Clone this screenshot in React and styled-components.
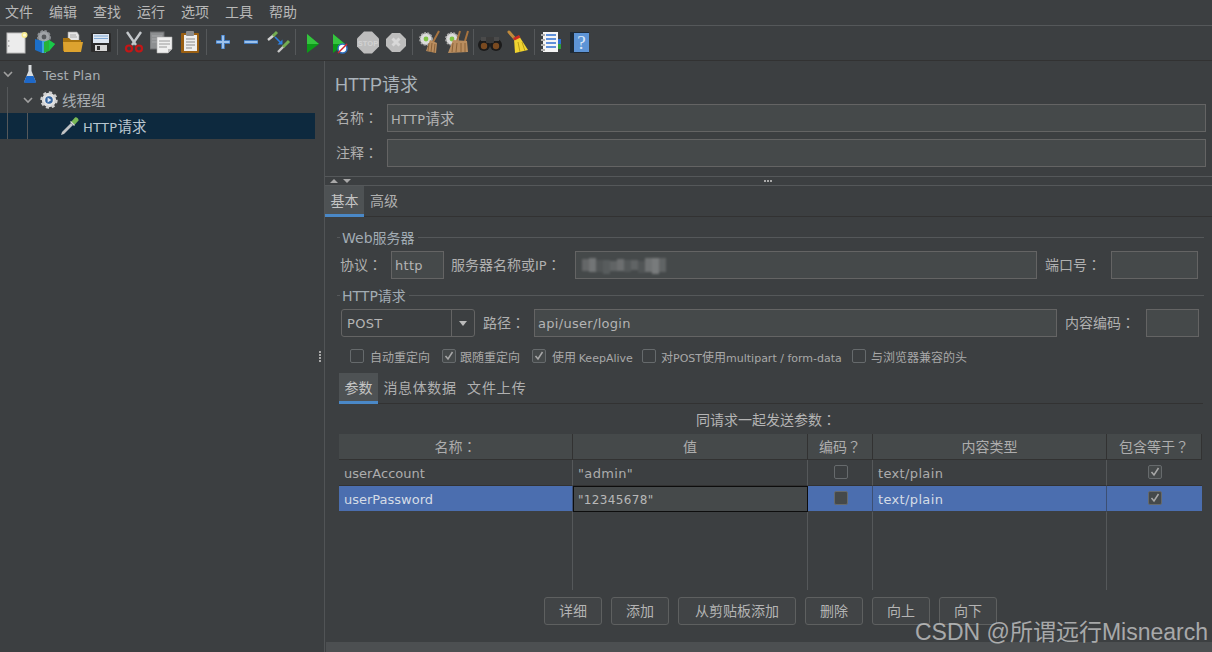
import React from 'react';
import styled, { createGlobalStyle } from 'styled-components';

const Global = createGlobalStyle`
  html, body { margin: 0; padding: 0; background: #3c3f41; }
  * { box-sizing: border-box; }
  body { font-family: "DejaVu Sans", "Noto Sans CJK SC", sans-serif; font-size: 14px; color: #bbbbbb; }
`;

const Page = styled.div`
  position: relative; width: 1212px; height: 652px; overflow: hidden;
  display: flex; flex-direction: column; background: #3c3f41;
`;
const MenuBar = styled.div`
  height: 26px; display: flex; gap: 16px; padding-left: 5px; align-items: center;
  border-bottom: 1px solid #55585a; color: #b8b8b8; font-family: "Noto Sans CJK SC", sans-serif;
  font-size: 14px; line-height: 24px; padding-bottom: 4px;
`;
const ToolBar = styled.div`
  height: 35px; display: flex; align-items: center; padding-left: 3px; padding-bottom: 2px;
  border-bottom: 1px solid #323232;
`;
const ToolButton = styled.div`
  width: 28px; height: 24px; display: flex; align-items: center; justify-content: center;
`;
const ToolSep = styled.div`
  width: 5px; height: 26px; display: flex; justify-content: center;
  &::before { content: ""; width: 1px; background: #55585a; }
`;
const Main = styled.div`flex: 1; display: flex; min-height: 0;`;
const Tree = styled.div`width: 315px; flex: none;`;
const TreeRow = styled.div`
  height: 26px; display: flex; align-items: center; padding-left: ${p => p.$pad}px;
  background: ${p => (p.$selected ? '#0d293e' : 'transparent')};
  color: ${p => (p.$selected ? '#b9c6d0' : '#a9aeb2')}; font-size: 13px; letter-spacing: ${p => p.$ls || 0}px;
  font-family: "DejaVu Sans", "Noto Sans CJK SC", sans-serif;
`;
const TreeText = styled.span`
  display: block; white-space: nowrap;
  padding-top: ${p => p.$pt || 0}px; padding-bottom: ${p => p.$pb || 0}px;
`;
const Cjk = styled.span`font-size: 14.5px; font-family: "Noto Sans CJK SC", sans-serif; letter-spacing: 0;`;
const Guide = styled.span`
  width: ${p => p.$w}px; height: 100%; flex: none; border-left: 1px solid #55585a;
`;
const Chevron = styled.svg`width: 12px; height: 12px; flex: none; margin-right: ${p => p.$mr}px;`;
const TreeIcon = styled.svg`width: 20px; height: 20px; flex: none; margin-right: 3px;`;
const Divider = styled.div`
  width: 10px; flex: none; border-right: 1px solid #515456; display: flex;
  align-items: flex-start; justify-content: center; padding-top: 290px;
`;
const Dots = styled.div`
  display: flex; flex-direction: ${p => (p.$row ? 'row' : 'column')}; gap: 1px;
  & > i { width: 2px; height: 2px; background: #a9a9a9; display: block; }
`;
const Editor = styled.div`flex: 1; min-width: 0; display: flex; flex-direction: column;`;
const Title = styled.div`
  height: 43px; padding: 12px 0 0 10px; font-size: 18px; line-height: 25px; color: #aab3ba;
  font-family: "Liberation Sans", "Noto Sans CJK SC", sans-serif;
`;
const FormRow = styled.div`
  display: flex; align-items: center; height: 28px; flex: none;
  padding: 0 ${p => p.$right ?? 6}px 0 ${p => p.$left ?? 11}px;
  margin-top: ${p => p.$top || 0}px;
`;
const Label = styled.span`
  flex: none; width: ${p => p.$w}px; margin-left: ${p => p.$ml || 0}px; white-space: nowrap; padding-bottom: 2px;
  font-family: "Noto Sans CJK SC", sans-serif; font-size: 14px; color: #b0b0b0;
`;
const Latin = styled.span`font-family: "DejaVu Sans", sans-serif; font-size: 13px;`;
const Punct = styled.span`font-family: "Noto Sans CJK TC", sans-serif;`;
const Field = styled.div`
  height: 28px; flex: ${p => (p.$w ? 'none' : '1')}; width: ${p => (p.$w ? `${p.$w}px` : 'auto')};
  min-width: 0; display: flex; align-items: center; padding-left: 3px;
  margin-left: ${p => p.$ml || 0}px;
  background: #45494a; border: 1px solid #646464; color: #b4b4b4; font-size: 13px; letter-spacing: 0.3px;
  font-family: "DejaVu Sans", "Noto Sans CJK SC", sans-serif;
`;
const FieldText = styled.span`white-space: nowrap; padding-bottom: 2px;`;
const Mosaic = styled.div`display: flex; align-items: center; height: 18px; margin-left: 3px; filter: blur(1px); opacity: 0.75;`;
const Tile = styled.i`display: block; width: 7px; height: ${p => p.$h}px; margin-top: ${p => p.$t}px;`;
const Splitter = styled.div`
  height: 10px; margin-top: 9px; border-top: 1px solid #55585a; border-bottom: 1px solid #55585a;
  display: flex; align-items: center; padding-left: 5px; flex: none;
`;
const SplitArrows = styled.svg`width: 22px; height: 8px; flex: none;`;
const SplitHandle = styled.div`margin-left: 412px;`;
const Tabs = styled.div`
  display: flex; height: 31px; flex: none; border-bottom: 1px solid #323232;
  margin: ${p => p.$margin}; font-family: "Noto Sans CJK SC", sans-serif; font-size: 14px;
`;
const Tab = styled.div`
  height: 31px; padding: 0 ${p => p.$px}px; display: flex; align-items: center;
  color: ${p => (p.$active ? '#c5c5c5' : '#b0b0b0')};
  background: ${p => (p.$active ? '#4e5254' : 'transparent')};
  border-bottom: 3px solid ${p => (p.$active ? '#4a88c7' : 'transparent')};
  letter-spacing: ${p => p.$ls || 0}px;
`;
const Section = styled.div`
  height: 20px; flex: none; margin: ${p => p.$top}px 8px 0 12px; display: flex; align-items: center;
  font-size: 14px; color: #a2acb4; font-family: "DejaVu Sans", "Noto Sans CJK SC", sans-serif;
  &::before { content: ""; width: 3px; height: 1px; background: #55585a; margin-right: 2px; }
  &::after { content: ""; flex: 1; height: 1px; background: #55585a; margin-left: 3px; }
`;
const Combo = styled.div`
  width: 134px; height: 28px; flex: none; display: flex; border: 1px solid #646464; border-radius: 3px;
  background: #3c3f41; align-items: center; font-size: 13px; letter-spacing: 0.3px; color: #b4b4b4;
`;
const ComboText = styled.span`flex: 1; padding-left: 5px;`;
const ComboArrow = styled.span`
  width: 23px; height: 100%; border-left: 1px solid #646464; display: flex; align-items: center; justify-content: center;
  &::before { content: ""; border-left: 4px solid transparent; border-right: 4px solid transparent; border-top: 5px solid #bbbbbb; }
`;
const Checks = styled.div`
  display: flex; align-items: center; height: 22px; margin-top: 8px; flex: none; padding-left: 25px;
`;
const CheckItem = styled.div`
  display: flex; align-items: center; width: ${p => p.$w}px; flex: none; white-space: nowrap;
  font-family: "Noto Sans CJK SC", sans-serif; font-size: 12px; color: #a8a8a8;
`;
const CheckText = styled.span`white-space: pre;`;
const CheckLatin = styled.span`font-family: "DejaVu Sans", sans-serif; font-size: 11px;`;
const Box = styled.span`
  width: 14px; height: 14px; flex: none; border: 1px solid #666a6c; border-radius: 2px; background: ${p => p.$bg || 'transparent'};
  margin-right: ${p => p.$mr ?? 6}px; display: flex; align-items: center; justify-content: center;
  & > svg { width: 10px; height: 10px; display: block; }
`;
const Caption = styled.div`
  height: 30px; flex: none; display: flex; align-items: center; padding-left: 371px;
  font-family: "Noto Sans CJK SC", sans-serif; font-size: 14px; color: #b4b4b4;
`;
const Table = styled.div`
  margin-left: 14px; width: 863px; display: grid; flex: none;
  grid-template-columns: 234px 235px 65px 234px 95px; grid-template-rows: 26px 26px 26px 78px;
`;
const Head = styled.div`
  background: #45494a; border-right: 1px solid #323232; border-bottom: 1px solid #323232; padding-bottom: 2px;
  display: flex; align-items: center; justify-content: center; color: #adadad;
  font-family: "Noto Sans CJK SC", sans-serif; font-size: 14px;
  &:last-of-type { border-right: none; }
`;
const Cell = styled.div`
  display: flex; align-items: center; justify-content: ${p => (p.$center ? 'center' : 'flex-start')};
  padding-left: ${p => (p.$center ? 1 : 5)}px; padding-bottom: ${p => (p.$center ? 2 : 0)}px;
  padding-top: ${p => (p.$center ? 0 : 1)}px;
  font-size: 13px; letter-spacing: ${p => p.$ls ?? 0.35}px;
  background: ${p => (p.$sel ? '#4b6eaf' : 'transparent')};
  color: ${p => (p.$sel ? '#d5dce6' : '#adadad')};
  border-right: ${p => (p.$last ? 'none' : `1px solid ${p.$sel ? '#3c4f73' : '#55585a'}`)};
  border-bottom: 1px solid ${p => (p.$sel ? '#3c3f41' : '#323232')};
`;
const EditCell = styled.div`
  background: #45494a; border: 1.5px solid #0d0d0d; display: flex; align-items: center;
  padding: 1px 0 0 4px; font-size: 12px; letter-spacing: 0.35px; color: #b8b8b8;
`;
const EmptyCell = styled.div`border-right: ${p => (p.$last ? 'none' : '1px solid #55585a')};`;
const Buttons = styled.div`
  display: flex; gap: 9px; margin: 7px 0 0 219px; height: 28px; flex: none;
`;
const Button = styled.div`
  height: 28px; width: ${p => p.$w}px; border: 1px solid #5e6060; border-radius: 3px; background: #414446;
  display: flex; align-items: center; justify-content: center; color: #b4b4b4; padding-bottom: 2px;
  font-family: "Noto Sans CJK SC", sans-serif; font-size: 14px;
`;
const HScroll = styled.div`height: 10px; margin: auto 0 0 1px; background: #4c4f51; flex: none;`;
const Watermark = styled.div`
  position: absolute; right: 4px; bottom: 6px; font-family: "Liberation Sans", "Noto Sans CJK SC", sans-serif;
  font-size: 23px; line-height: 28px; color: rgba(225, 225, 225, 0.66); white-space: nowrap;
`;

const S = ({ children }) => <svg width="24" height="24" viewBox="0 0 24 24">{children}</svg>;

const IconNew = () => <S>
  <rect x="2" y="3" width="18" height="20" fill="#ececec" stroke="#bdbdbd" />
  <circle cx="3.800" cy="11" r=".7" fill="#888" /><circle cx="3.800" cy="16" r=".7" fill="#888" />
  <circle cx="19.500" cy="5" r="3" fill="#f6e98a" /><circle cx="19.500" cy="5" r="1.600" fill="#fffbd5" />
</S>;
const IconTemplates = () => <S>
  <circle cx="11" cy="7" r="6" fill="#a0a4a8" stroke="#8a8e92" strokeWidth="2" strokeDasharray="2.500 1.500" />
  <circle cx="11" cy="7" r="2.400" fill="#55595c" />
  <path d="M2 9l7 2v12l-7-3z" fill="#1c6fc8" />
  <path d="M9 11h4v12H9z" fill="#3fa4dc" />
  <path d="M11 12l5-2 6 4-6 7-5 2z" fill="#27b338" />
  <path d="M16 10l6 4-6 7z" fill="#19c94a" />
</S>;
const IconOpen = () => <S>
  <path d="M7 2h9l2 3v8H7z" fill="#e6e6e6" stroke="#9a9a9a" strokeWidth=".6" />
  <path d="M9 5h6M9 7h7" stroke="#9a9a9a" strokeWidth=".8" />
  <path d="M2 8h6l2 2h10v11H2z" fill="#a9740f" />
  <path d="M2 12h20l-2 10H3z" fill="#dda32f" />
</S>;
const IconSave = () => <S>
  <rect x="2" y="3" width="20" height="19" rx="1" fill="#2b2b2b" />
  <rect x="4" y="4" width="16" height="9" fill="#dfe7f1" />
  <path d="M5 6h14M5 8.500h14" stroke="#7fa9d6" strokeWidth="1" />
  <rect x="6" y="15" width="12" height="6" fill="#d6d6d6" />
  <rect x="8" y="16" width="3" height="4" fill="#333" />
</S>;
const IconCut = () => <S>
  <path d="M5 2l9 13M19 2l-9 13" stroke="#c4c8cb" strokeWidth="2.400" />
  <circle cx="7" cy="18.500" r="3" fill="none" stroke="#c41616" strokeWidth="2.200" />
  <circle cx="17" cy="18.500" r="3" fill="none" stroke="#c41616" strokeWidth="2.200" />
</S>;
const IconCopy = () => <S>
  <rect x="0" y="2" width="14" height="17" fill="#8d8f91" stroke="#6b6d6f" />
  <path d="M2 6h10M2 9h10M2 12h10" stroke="#a6a8aa" />
  <path d="M7 7h15v12l-4 4H7z" fill="#efefef" stroke="#aaa" strokeWidth=".6" />
  <path d="M9 11h11M9 14h11M9 17h8" stroke="#9a9a9a" />
  <path d="M18 23v-4h4z" fill="#bbb" />
</S>;
const IconPaste = () => <S>
  <rect x="3" y="3" width="18" height="20" rx="1" fill="#9a5f12" />
  <rect x="6" y="5" width="13" height="16" fill="#eeeeee" />
  <path d="M8 9h9M8 12h9M8 15h9M8 18h6" stroke="#8b8b8b" />
  <rect x="8" y="1" width="8" height="5" rx="1" fill="#8c8c8c" />
</S>;
const IconPlus = () => <S>
  <path d="M12 5v14M5 12h14" stroke="#3f76b8" strokeWidth="4" />
  <path d="M12 5.500v13M5.500 12h13" stroke="#9dc2ec" strokeWidth="2" />
</S>;
const IconMinus = () => <S>
  <path d="M5 12h14" stroke="#3f76b8" strokeWidth="4" />
  <path d="M5.500 12h13" stroke="#9dc2ec" strokeWidth="2" />
</S>;
const IconToggle = () => <S>
  <path d="M1 10l6-5" stroke="#d2d2d2" strokeWidth="2.400" /><path d="M6 6l4-4" stroke="#73ad52" strokeWidth="3" />
  <path d="M11 22l6-6" stroke="#c8c8c8" strokeWidth="2.400" /><path d="M16 17l6-6" stroke="#73ad52" strokeWidth="3" />
  <path d="M8 7l6 6" stroke="#2d7fe0" strokeWidth="1.600" /><path d="M15.500 9.500v5h-5z" fill="#2d7fe0" />
</S>;
const IconPlay = () => <S>
  <path d="M7 4l12 10L7 23z" fill="#0c9a18" /><path d="M7 4l12 10H7z" fill="#35c43f" />
</S>;
const IconPlayNo = () => <S>
  <path d="M5 4l12 10L5 23z" fill="#0c9a18" /><path d="M5 4l12 10H5z" fill="#35c43f" />
  <circle cx="14.500" cy="18.500" r="4.500" fill="#ffffff" stroke="#2d6fc0" strokeWidth="1.500" />
  <path d="M10 23l9-9" stroke="#d2232a" strokeWidth="1.500" />
</S>;
const IconStop = () => <S>
  <path d="M8 1.500h8l7 7v8l-7 7H8l-7-7v-8z" fill="#bdbdbd" />
  <text x="12" y="15.500" textAnchor="middle" fontFamily="Liberation Sans, sans-serif" fontWeight="700" fontSize="7.500" fill="#d2d2d2">STOP</text>
</S>;
const IconShut = () => <S>
  <path d="M8 3h8l6 6v7l-6 6H8l-6-6V9z" fill="#bdbdbd" />
  <path d="M8.500 8.500l7 7M15.500 8.500l-7 7" stroke="#d8d8d8" strokeWidth="3" />
</S>;
const Gear = ({ x = 7, y = 7 }) => <g>
  <circle cx={x} cy={y} r="6" fill="#dcdcdc" stroke="#aaa" strokeDasharray="2 1.200" strokeWidth="1.800" />
  <circle cx={x} cy={y} r="2.400" fill="#7fc244" />
</g>;
const IconClear = () => <S>
  <Gear x={9} y={9} />
  <path d="M22 1l-6 11" stroke="#a8743f" strokeWidth="2" />
  <path d="M13 10l7 3-1 10-10-2z" fill="#b98d5f" />
  <path d="M12 13l-1 8M15 13l-1 9M18 14l-1 9" stroke="#8a6238" />
</S>;
const IconClearAll = () => <S>
  <Gear x={7} y={9} />
  <path d="M15 1l-3 10M23 1l-3 10" stroke="#a8743f" strokeWidth="2" />
  <path d="M8 10l14 1 1 11-20 1z" fill="#b98d5f" />
  <path d="M8 13l-1 9M12 13l-1 9M16 13v9M20 13v9" stroke="#8a6238" />
</S>;
const IconFind = () => <S>
  <circle cx="6" cy="15" r="6" fill="#1b1b1b" /><circle cx="18" cy="15" r="6" fill="#1b1b1b" />
  <circle cx="6" cy="16" r="3.200" fill="#7a4a20" /><circle cx="18" cy="16" r="3.200" fill="#7a4a20" />
  <rect x="8" y="7" width="8" height="6" rx="1" fill="#3a3a3a" />
  <rect x="3" y="7" width="5" height="4" fill="#4a4a4a" /><rect x="16" y="7" width="5" height="4" fill="#4a4a4a" />
</S>;
const IconBroom = () => <S>
  <path d="M3 2l7 8" stroke="#c08a3c" strokeWidth="3" strokeLinecap="round" />
  <path d="M8 9l5-3 9 14-13 3z" fill="#f0d430" /><path d="M7 8l6-3 1.500 2.500-6 3z" fill="#cc2b22" />
  <path d="M12 12l2 10M16 12l3 9" stroke="#b99e18" />
</S>;
const IconLog = () => <S>
  <rect x="4" y="2" width="15" height="20" fill="#f5f5f5" />
  <path d="M7 5h10M7 9h10M7 13h10M7 17h10" stroke="#2e6fd1" strokeWidth="1.400" />
  <path d="M2 5h4M2 10h4M2 15h4M2 20h4" stroke="#e8e8e8" strokeWidth="2" />
  <path d="M2 5h4M2 10h4M2 15h4M2 20h4" stroke="#222" strokeWidth=".6" />
  <rect x="19" y="9" width="3" height="5" fill="#2e6fd1" /><rect x="19" y="14" width="3" height="5" fill="#2e9b3c" />
</S>;
const IconHelp = () => <S>
  <rect x="3" y="2" width="19" height="21" fill="#1e2a36" />
  <rect x="7" y="3" width="15" height="19" fill="#5d94d6" />
  <text x="14.500" y="19" textAnchor="middle" fontFamily="Liberation Serif, serif" fontSize="19" fill="#dbe8f7">?</text>
</S>;

const Flask = () => <TreeIcon viewBox="0 0 20 20">
  <path d="M8.500 1h3v6l4 10a1.500 1.500 0 0 1-1.500 2H6a1.500 1.500 0 0 1-1.500-2l4-10z" fill="#d9dde0" />
  <path d="M6.500 12h7l2.500 6-1 1H5l-1-1z" fill="#1e68c8" />
</TreeIcon>;
const GearIcon = () => <TreeIcon viewBox="0 0 20 20">
  <circle cx="10" cy="10" r="7.200" fill="#e0e0e0" stroke="#cfcfcf" strokeWidth="3" strokeDasharray="3 2.600" />
  <circle cx="10" cy="10" r="5" fill="#e6e6e6" />
  <circle cx="10" cy="10" r="3.800" fill="#35659f" />
  <path d="M8.600 7.600v4.800l3.800-2.400z" fill="#d8e4f3" />
</TreeIcon>;
const Pipette = () => <TreeIcon viewBox="0 0 20 20">
  <path d="M1 19l3-1 9-9-2-2-9 9z" fill="#bfc2c4" />
  <path d="M11 6l4-4.500c1-1 4 1 3.500 3l-4 4.500z" fill="#79b956" />
  <path d="M10.500 5.500l4 4" stroke="#d8d8d8" strokeWidth="1.200" />
</TreeIcon>;
const Down = ({ mr }) => <Chevron $mr={mr} viewBox="0 0 12 12"><path d="M2 4l4 4 4-4" fill="none" stroke="#a0a0a0" strokeWidth="1.600" /></Chevron>;
const Check = () => <svg viewBox="0 0 10 10"><path d="M1.500 5l2.500 3 4.500-7" fill="none" stroke="#a8a8a8" strokeWidth="1.500" /></svg>;

const tiles = [
  ['#6f7172', 12, 0], ['#828485', 14, 0], ['#55595a', 12, 2], ['#5f6364', 14, 4], ['#6b6e6f', 10, 2], ['#797b7c', 12, 0],
  ['#5a5e5f', 12, 2], ['#6a6d6e', 10, 0], ['#55595a', 12, 4], ['#7e8081', 14, 0], ['#8a8c8d', 16, 2], ['#6a6d6e', 14, 0],
];

const tools = [
  [IconNew, IconTemplates, IconOpen, IconSave],
  [IconCut, IconCopy, IconPaste],
  [IconPlus, IconMinus, IconToggle],
  [IconPlay, IconPlayNo, IconStop, IconShut],
  [IconClear, IconClearAll],
  [IconFind, IconBroom],
  [IconLog, IconHelp],
];

const rows = [
  { name: 'userAccount', value: '"admin"' },
  { name: 'userPassword', value: '"12345678"', sel: true },
];

export default function App() {
  return (
    <Page>
      <Global />
      <MenuBar>
        {['文件', '编辑', '查找', '运行', '选项', '工具', '帮助'].map(m => <span key={m}>{m}</span>)}
      </MenuBar>
      <ToolBar>
        {tools.map((group, i) => (
          <React.Fragment key={i}>
            {i > 0 && <ToolSep />}
            {group.map((I, j) => <ToolButton key={j}><I /></ToolButton>)}
          </React.Fragment>
        ))}
      </ToolBar>
      <Main>
        <Tree>
          <TreeRow $pad={2}><Down mr={6} /><Flask /><TreeText $pt={2}>Test Plan</TreeText></TreeRow>
          <TreeRow $pad={7}><Guide $w={15} /><Down mr={5} /><GearIcon /><TreeText $pb={2}><Cjk>线程组</Cjk></TreeText></TreeRow>
          <TreeRow $pad={7} $ls={0.3} $selected><Guide $w={20} /><Guide $w={33} /><Pipette /><TreeText $pb={2}>HTTP<Cjk>请求</Cjk></TreeText></TreeRow>
        </Tree>
        <Divider><Dots>{[0, 1, 2, 3].map(i => <i key={i} />)}</Dots></Divider>
        <Editor>
          <Title>HTTP请求</Title>
          <FormRow><Label $w={51}>名称<Punct>：</Punct></Label><Field><FieldText>HTTP<Cjk>请求</Cjk></FieldText></Field></FormRow>
          <FormRow $top={7}><Label $w={51}>注释<Punct>：</Punct></Label><Field /></FormRow>
          <Splitter>
            <SplitArrows viewBox="0 0 22 8"><path d="M0 6l4-4 4 4z M13 2h8l-4 4z" fill="#a9a9a9" /></SplitArrows>
            <SplitHandle><Dots $row>{[0, 1, 2].map(i => <i key={i} />)}</Dots></SplitHandle>
          </Splitter>
          <Tabs $margin="0">
            <Tab $px={5.5} $active>基本</Tab>
            <Tab $px={6}>高级</Tab>
          </Tabs>
          <Section $top={10}>Web服务器</Section>
          <FormRow $top={4} $left={15} $right={14}>
            <Label $w={51}>协议<Punct>：</Punct></Label>
            <Field $w={53}>http</Field>
            <Label $w={124} $ml={7}>服务器名称或<Latin>IP</Latin><Punct>：</Punct></Label>
            <Field>
              <Mosaic>{tiles.map((t, i) => <Tile key={i} $h={t[1]} $t={t[2]} style={{ background: t[0] }} />)}</Mosaic>
            </Field>
            <Label $w={66} $ml={8}>端口号<Punct>：</Punct></Label>
            <Field $w={87} />
          </FormRow>
          <Section $top={6}>HTTP请求</Section>
          <FormRow $top={4} $left={16} $right={13}>
            <Combo><ComboText>POST</ComboText><ComboArrow /></Combo>
            <Label $w={51} $ml={8}>路径<Punct>：</Punct></Label>
            <Field>api/user/login</Field>
            <Label $w={81} $ml={8}>内容编码<Punct>：</Punct></Label>
            <Field $w={53} />
          </FormRow>
          <Checks>
            <CheckItem $w={92}><Box /><CheckText>自动重定向</CheckText></CheckItem>
            <CheckItem $w={90}><Box $mr={4} $bg="#45494a"><Check /></Box><CheckText>跟随重定向</CheckText></CheckItem>
            <CheckItem $w={110}><Box $bg="#45494a"><Check /></Box><CheckText>使用 <CheckLatin>KeepAlive</CheckLatin></CheckText></CheckItem>
            <CheckItem $w={210}><Box $mr={5} /><CheckText>对<CheckLatin>POST</CheckLatin>使用<CheckLatin>multipart / form-data</CheckLatin></CheckText></CheckItem>
            <CheckItem $w={130}><Box $mr={5} /><CheckText>与浏览器兼容的头</CheckText></CheckItem>
          </Checks>
          <Tabs $margin="6px 9px 0 14px">
            <Tab $px={5.5} $active>参数</Tab>
            <Tab $px={5.5} $ls={0.6}>消息体数据</Tab>
            <Tab $px={5} $ls={0.9}>文件上传</Tab>
          </Tabs>
          <Caption>同请求一起发送参数<Punct>：</Punct></Caption>
          <Table>
            <Head>名称<Punct>：</Punct></Head>
            <Head>值</Head>
            <Head>编码<Punct>？</Punct></Head>
            <Head>内容类型</Head>
            <Head>包含等于<Punct>？</Punct></Head>
            {rows.map(r => (
              <React.Fragment key={r.name}>
                <Cell $sel={r.sel} $ls={0}>{r.name}</Cell>
                {r.sel ? <EditCell>{r.value}</EditCell> : <Cell>{r.value}</Cell>}
                <Cell $center $sel={r.sel}><Box $mr={0} $bg={r.sel ? '#45494a' : 'transparent'} /></Cell>
                <Cell $sel={r.sel}>text/plain</Cell>
                <Cell $center $last $sel={r.sel}><Box $mr={0} $bg="#45494a"><Check /></Box></Cell>
              </React.Fragment>
            ))}
            <EmptyCell /><EmptyCell /><EmptyCell /><EmptyCell /><EmptyCell $last />
          </Table>
          <Buttons>
            <Button $w={58}>详细</Button>
            <Button $w={58}>添加</Button>
            <Button $w={118}>从剪贴板添加</Button>
            <Button $w={58}>删除</Button>
            <Button $w={58}>向上</Button>
            <Button $w={58}>向下</Button>
          </Buttons>
          <HScroll />
        </Editor>
      </Main>
      <Watermark>CSDN @所谓远行Misnearch</Watermark>
    </Page>
  );
}
